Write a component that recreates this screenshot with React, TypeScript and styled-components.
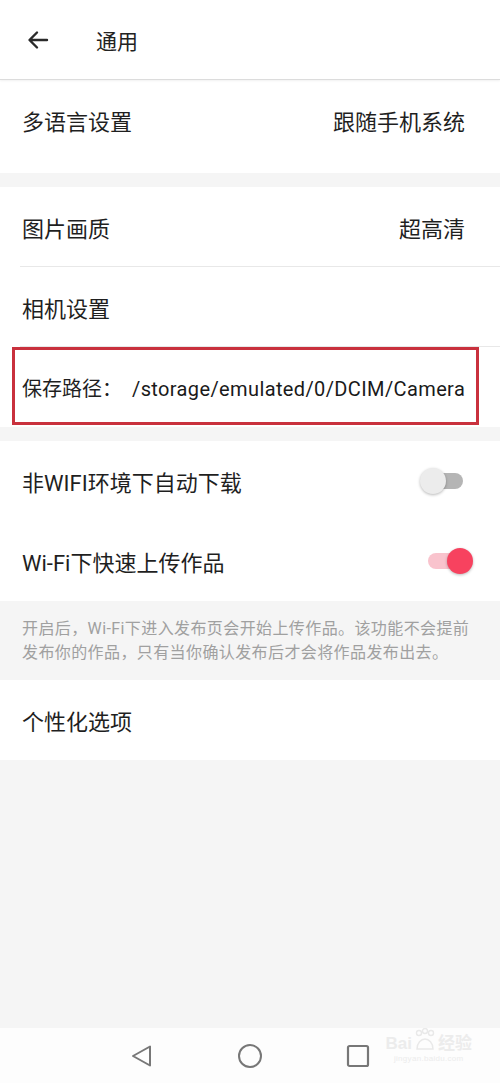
import styled, { createGlobalStyle } from "styled-components";

const GlobalStyle = createGlobalStyle`
  html, body {
    margin: 0;
    padding: 0;
    background: #f5f5f5;
  }
  body {
    font-family: Roboto, "Noto Sans CJK SC", sans-serif;
    color: #1f1f1f;
  }
`;

export const Page = styled.div`
  width: 500px;
  height: 1083px;
  display: flex;
  flex-direction: column;
  background: #f5f5f5;
  overflow: hidden;
`;

export const Header = styled.header`
  height: 79px;
  display: flex;
  align-items: center;
  background: #ffffff;
  border-bottom: 1px solid #dcdcdc;
  box-shadow: 0 1px 2px rgba(0, 0, 0, 0.06);
  position: relative;
  z-index: 1;
`;

export const BackButton = styled.div`
  width: 96px;
  height: 79px;
  display: flex;
  align-items: center;
  padding-left: 26px;
  box-sizing: border-box;
`;

export const Title = styled.h1`
  margin: 0;
  font-size: 21px;
  font-weight: 400;
  color: #222;
`;

export const Content = styled.main`
  flex: 1;
  display: flex;
  flex-direction: column;
`;

export const Section = styled.section<{ $gapBefore?: boolean }>`
  background: #ffffff;
  margin-top: ${(p) => (p.$gapBefore ? "14px" : "0")};
  display: flex;
  flex-direction: column;
`;

export const Row = styled.div<{ $extra?: number; $divider?: boolean; $marked?: boolean }>`
  height: 80px;
  padding: 0 35px 0 22px;
  padding-bottom: ${(p) => p.$extra ?? 0}px;
  display: flex;
  align-items: center;
  justify-content: space-between;
  position: relative;
  ${(p) =>
    p.$divider &&
    `
    &::before {
      content: "";
      position: absolute;
      left: 20px;
      right: 0;
      bottom: 0;
      height: 1px;
      background: #e8e8e8;
    }
  `}
  ${(p) =>
    p.$marked &&
    `
    &::after {
      content: "";
      position: absolute;
      left: 12px;
      right: 21px;
      top: 0;
      bottom: 2px;
      border: 3px solid #c9313d;
      pointer-events: none;
    }
  `}
`;

export const Label = styled.span<{ $size?: number }>`
  font-size: ${(p) => p.$size ?? 22}px;
  color: #1f1f1f;
  white-space: nowrap;
`;

export const Value = styled.span`
  font-size: 22px;
  color: #1f1f1f;
`;

export const PathText = styled.span`
  font-size: 20px;
  color: #1a1a1a;
  margin-left: 10px;
  letter-spacing: 0.38px;
`;

export const Track = styled.div<{ $on: boolean }>`
  width: 36px;
  height: 16px;
  border-radius: 8px;
  background: ${(p) => (p.$on ? "#f9c3cd" : "#b5b5b5")};
  position: relative;
  margin-right: ${(p) => (p.$on ? "1px" : "2px")};
`;

export const Thumb = styled.div<{ $on: boolean }>`
  position: absolute;
  top: -5px;
  left: ${(p) => (p.$on ? "19px" : "-7px")};
  width: 26px;
  height: 26px;
  border-radius: 50%;
  background: ${(p) => (p.$on ? "#f7425f" : "#ececec")};
  box-shadow: 0 1px 3px rgba(0, 0, 0, 0.28);
`;

export const Note = styled.p`
  margin: 0;
  padding: 16px 22px 15px 22px;
  font-size: 16px;
  line-height: 24px;
  color: #a0a0a0;
  letter-spacing: 0.4px;
`;

export const NavBar = styled.nav`
  height: 55px;
  background: #fdfdfd;
  display: flex;
  align-items: center;
  justify-content: center;
  gap: 84px;
  position: relative;
`;

export const NavIcon = styled.svg`
  width: 24px;
  height: 24px;
  display: block;
`;

export const Watermark = styled.div`
  position: absolute;
  right: 28px;
  top: 0;
  display: flex;
  flex-direction: column;
  align-items: center;
  color: #ececec;
  font-family: "Liberation Sans", "Noto Sans CJK SC", sans-serif;
  line-height: 1;
`;

export const MarkTop = styled.div`
  display: flex;
  align-items: flex-end;
  font-size: 17px;
  font-weight: 700;
  gap: 2px;
`;

export const MarkSub = styled.div`
  font-size: 8px;
  margin-top: 3px;
  letter-spacing: 0.3px;
`;

const Switch = ({ on }: { on: boolean }) => (
  <Track $on={on}>
    <Thumb $on={on} />
  </Track>
);

export default function App() {
  return (
    <Page>
      <GlobalStyle />
      <Header>
        <BackButton>
          <svg width="24" height="24" viewBox="0 0 24 24" fill="none">
            <path
              d="M21 12H4M11 4.5L3.5 12l7.5 7.5"
              stroke="#2a2a2a"
              strokeWidth="2.4"
              strokeLinecap="round"
              strokeLinejoin="round"
            />
          </svg>
        </BackButton>
        <Title>通用</Title>
      </Header>

      <Content>
        <Section>
          <Row $extra={13}>
            <Label>多语言设置</Label>
            <Value>跟随手机系统</Value>
          </Row>
        </Section>

        <Section $gapBefore>
          <Row $divider>
            <Label>图片画质</Label>
            <Value>超高清</Value>
          </Row>
          <Row $divider>
            <Label>相机设置</Label>
          </Row>
          <Row $marked>
            <Label $size={20}>
              保存路径：
              <PathText>/storage/emulated/0/DCIM/Camera</PathText>
            </Label>
          </Row>
        </Section>

        <Section $gapBefore>
          <Row>
            <Label>非WIFI环境下自动下载</Label>
            <Switch on={false} />
          </Row>
          <Row>
            <Label>Wi-Fi下快速上传作品</Label>
            <Switch on={true} />
          </Row>
        </Section>

        <Note>
          开启后，Wi-Fi下进入发布页会开始上传作品。该功能不会提前发布你的作品，只有当你确认发布后才会将作品发布出去。
        </Note>

        <Section>
          <Row>
            <Label>个性化选项</Label>
          </Row>
        </Section>
      </Content>

      <NavBar>
        <NavIcon viewBox="0 0 24 24" fill="none">
          <path
            d="M20 2.5v19L3 12z"
            stroke="#777"
            strokeWidth="2"
            strokeLinejoin="round"
          />
        </NavIcon>
        <NavIcon viewBox="0 0 24 24" fill="none">
          <circle cx="12" cy="12" r="11" stroke="#777" strokeWidth="2" />
        </NavIcon>
        <NavIcon viewBox="0 0 24 24" fill="none">
          <rect x="2" y="2" width="20" height="20" rx="1.5" stroke="#777" strokeWidth="2.2" />
        </NavIcon>
        <Watermark>
          <MarkTop>
            <span>Bai</span>
            <svg width="22" height="24" viewBox="0 0 22 24" fill="none" stroke="#e9e9e9" strokeWidth="1.4">
              <circle cx="5" cy="5" r="2.5" />
              <circle cx="11" cy="3" r="2.5" />
              <circle cx="17" cy="5" r="2.5" />
              <path d="M3 21c0-6 4-10 8-10s8 4 8 10z" />
            </svg>
            <span>经验</span>
          </MarkTop>
          <MarkSub>jingyan.baidu.com</MarkSub>
        </Watermark>
      </NavBar>
    </Page>
  );
}
